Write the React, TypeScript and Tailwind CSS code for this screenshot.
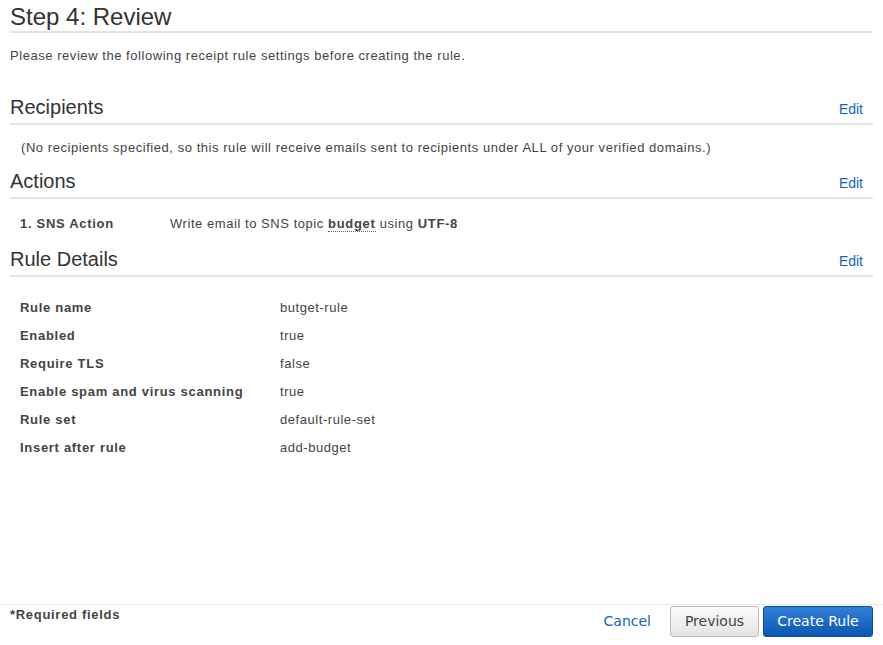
import React from 'react';

const rules = [
  ['Rule name', 'butget-rule'],
  ['Enabled', 'true'],
  ['Require TLS', 'false'],
  ['Enable spam and virus scanning', 'true'],
  ['Rule set', 'default-rule-set'],
  ['Insert after rule', 'add-budget'],
];

function SectionHeader({ title, className }: { title: string; className: string }) {
  return (
    <div className={`flex items-baseline justify-between border-b-2 border-[#e4e4e4] pr-[10px] ${className}`}>
      <h2 className="text-[20px] leading-[24px] text-[#333]">{title}</h2>
      <a href="#" className="text-[14px] leading-[24px] text-[#1166bb]">
        Edit
      </a>
    </div>
  );
}

export default function App() {
  return (
    <div
      className="flex h-[645px] w-[883px] flex-col bg-white text-[13px] text-[#444]"
      style={{ fontFamily: '"Liberation Sans", Arial, sans-serif' }}
    >
      <div className="flex-1 px-[10px] tracking-[0.55px]">
        <h1 className="border-b-2 border-[#e4e4e4] pt-[3px] text-[24px] leading-[28px] tracking-normal text-[#333]">
          Step 4: Review
        </h1>
        <p className="mt-[13px] leading-[20px]">
          Please review the following receipt rule settings before creating the rule.
        </p>

        <SectionHeader title="Recipients" className="mt-[29px] pb-[2px] tracking-normal" />
        <p className="mt-[13px] pl-[11px] leading-[20px]">
          (No recipients specified, so this rule will receive emails sent to recipients under ALL of your verified
          domains.)
        </p>

        <SectionHeader title="Actions" className="mt-[11px] pb-[2px] tracking-normal" />
        <div className="mt-[15px] flex pl-[10px] leading-[20px]">
          <span className="w-[150px] font-bold tracking-[0.7px]">1. SNS Action</span>
          <span>
            Write email to SNS topic{' '}
            <span className="border-b border-dotted border-[#666] font-bold tracking-[0.7px]">budget</span> using{' '}
            <span className="font-bold tracking-[0.7px]">UTF-8</span>
          </span>
        </div>

        <SectionHeader title="Rule Details" className="mt-[13px] pb-[2px] tracking-normal" />
        <div className="mt-[17px] flex flex-col pl-[10px]">
          {rules.map(([label, value]) => (
            <div key={label} className="flex leading-[28px]">
              <span className="w-[260px] font-bold tracking-[0.7px]">{label}</span>
              <span>{value}</span>
            </div>
          ))}
        </div>
      </div>

      <div className="flex h-[41px] items-start justify-between border-t border-[#ececec] px-[10px]">
        <span className="font-bold leading-[20px] tracking-[0.7px]">*Required fields</span>
        <div
          className="flex items-center pt-[1px] text-[14px]"
          style={{ fontFamily: '"DejaVu Sans", Verdana, sans-serif' }}
        >
          <a href="#" className="mr-[19px] text-[#1166bb]">
            Cancel
          </a>
          <button className="h-[31px] w-[89px] rounded-[3px] border border-[#bdbdbd] bg-gradient-to-b from-[#fbfbfb] to-[#e4e4e4] text-[#444]">
            Previous
          </button>
          <button className="ml-[4px] h-[31px] w-[110px] rounded-[3px] border border-[#0c4f9c] bg-gradient-to-b from-[#2f80d8] to-[#0a57b2] text-white">
            Create Rule
          </button>
        </div>
      </div>
    </div>
  );
}
